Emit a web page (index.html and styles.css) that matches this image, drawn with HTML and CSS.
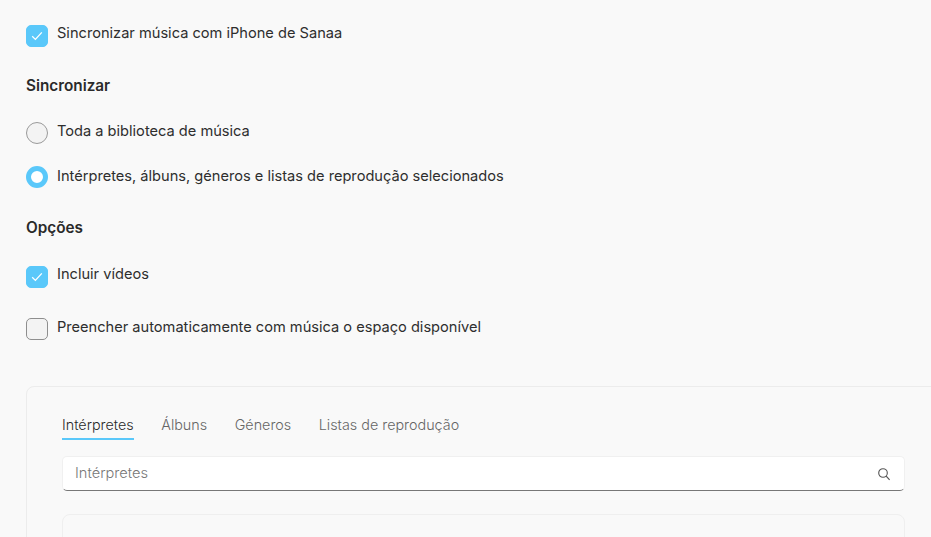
FILE: index.html
```html
<!DOCTYPE html>
<html lang="pt">
<head>
    <meta charset="UTF-8" />
    <meta name="viewport" content="width=device-width, initial-scale=1.0" />
    <title>Sincronizar música</title>
    <link rel="stylesheet" href="styles.css">
</head>
<body>
    <div class="container">
        <div class="option option-first">
            <span class="box box-on">
                <svg width="12" height="10" viewBox="0 0 12 10"><path d="M1.2 5.2 L4.4 8.4 L10.8 1.4" fill="none" stroke="#fff" stroke-width="1.3"/></svg>
            </span>
            <span class="label">Sincronizar música com iPhone de Sanaa</span>
        </div>

        <h2 class="heading heading-sync">Sincronizar</h2>
        <div class="option option-all">
            <span class="radio"></span>
            <span class="label label-low">Toda a biblioteca de música</span>
        </div>
        <div class="option option-selected">
            <span class="radio radio-on"></span>
            <span class="label label-lower">Intérpretes, álbuns, géneros e listas de reprodução selecionados</span>
        </div>

        <h2 class="heading heading-options">Opções</h2>
        <div class="option option-videos">
            <span class="box box-on">
                <svg width="12" height="10" viewBox="0 0 12 10"><path d="M1.2 5.2 L4.4 8.4 L10.8 1.4" fill="none" stroke="#fff" stroke-width="1.3"/></svg>
            </span>
            <span class="label">Incluir vídeos</span>
        </div>
        <div class="option option-fill">
            <span class="box"></span>
            <span class="label label-low">Preencher automaticamente com música o espaço disponível</span>
        </div>

        <div class="panel">
            <div class="tabs">
                <span class="tab tab-active">Intérpretes</span>
                <span class="tab">Álbuns</span>
                <span class="tab">Géneros</span>
                <span class="tab">Listas de reprodução</span>
            </div>
            <div class="search">
                <span class="search-text">Intérpretes</span>
                <svg class="search-icon" width="14" height="14" viewBox="0 0 14 14"><circle cx="6" cy="6" r="4.3" fill="none" stroke="#555" stroke-width="1.1"/><path d="M9.2 9.2 L12.6 12.8" fill="none" stroke="#555" stroke-width="1.2"/></svg>
            </div>
            <div class="list"></div>
        </div>
    </div>
</body>
</html>
```

FILE: styles.css
```css
* {
    margin: 0;
    padding: 0;
    box-sizing: border-box;
}

html,
body {
    height: 100%;
    overflow: hidden;
}

body {
    background-color: #f9f9f9;
    color: #2e2e2e;
    font-family: Inter, "Liberation Sans", sans-serif;
    font-size: 14.62px;
}

.container {
    padding: 25px 0 0 26px;
}

.option {
    display: flex;
    align-items: flex-start;
    gap: 9px;
}

.label {
    line-height: 16px;
}

.label-low {
    margin-top: 1px;
}

.label-lower {
    margin-top: 2px;
}

.option-all {
    margin-top: 27px;
}

.option-selected {
    margin-top: 22px;
}

.option-videos {
    margin-top: 29px;
}

.option-fill {
    margin-top: 30px;
}

.heading {
    font-size: 15.3px;
    font-weight: 600;
    line-height: 18px;
    color: #2a2a2a;
}

.heading-sync {
    margin-top: 30px;
}

.heading-options {
    margin-top: 31px;
}

.box {
    display: flex;
    justify-content: center;
    align-items: center;
    width: 22px;
    height: 22px;
    border: 1px solid #8e8e8e;
    border-radius: 5px;
    background-color: #f3f3f3;
    flex-shrink: 0;
}

.box-on {
    background-color: #5ac8fa;
    border-color: #5ac8fa;
}

.radio {
    width: 22px;
    height: 22px;
    border: 1px solid #9a9a9a;
    border-radius: 50%;
    background-color: #f3f3f3;
    flex-shrink: 0;
}

.radio-on {
    border: 5.5px solid #5ac8fa;
    background-color: #fff;
}

.panel {
    margin: 46px -11px 0 0;
    padding: 28px 36px 0 35px;
    border: 1px solid #ececec;
    border-radius: 8px 0 0 0;
    height: 300px;
}

.tabs {
    display: flex;
    gap: 27.5px;
}

.tab {
    font-size: 14.35px;
    font-weight: 300;
    line-height: 20px;
    color: #666;
    padding-bottom: 3px;
    border-bottom: 2px solid transparent;
}

.tab-active {
    color: #2a2a2a;
    border-bottom-color: #5ac8fa;
}

.search {
    display: flex;
    justify-content: space-between;
    align-items: center;
    height: 35px;
    margin-top: 16px;
    padding: 0 13px 0 12px;
    background-color: #fff;
    border: 1px solid #f0f0f0;
    border-bottom: 1px solid #777;
    border-radius: 5px;
}

.search-text {
    font-weight: 300;
    color: #777;
    padding-bottom: 2px;
}

.list {
    height: 120px;
    margin-top: 23px;
    border: 1px solid #efefef;
    border-radius: 8px;
}
```
